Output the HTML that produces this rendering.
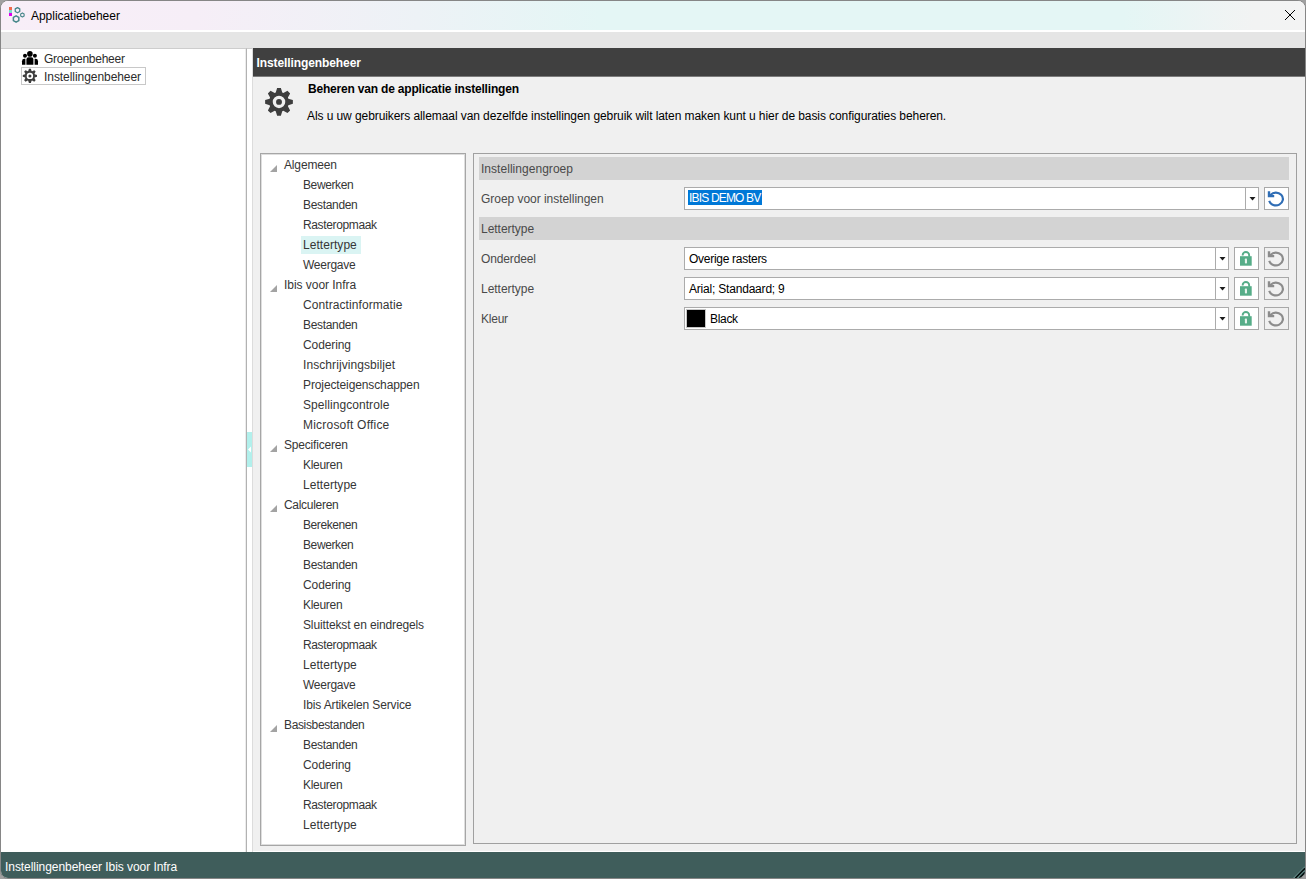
<!DOCTYPE html>
<html lang="nl">
<head>
<meta charset="utf-8">
<title>Applicatiebeheer</title>
<style>
html,body{margin:0;padding:0;}
body{width:1306px;height:879px;overflow:hidden;background:#a0a0a0;font-family:"Liberation Sans",sans-serif;font-size:12px;color:#1e1e1e;position:relative;}
.abs{position:absolute;}
svg{position:absolute;overflow:visible;}
#win{position:absolute;left:0;top:0;width:1306px;height:879px;box-sizing:border-box;border:1px solid #868686;border-radius:8px;overflow:hidden;background:#fff;}
#inner{position:absolute;left:-1px;top:-1px;width:1306px;height:879px;}
#titlebar{position:absolute;left:0;top:0;width:1306px;height:30px;background:linear-gradient(90deg,#f8eef8 0%,#f6eef7 15%,#edf2f6 32%,#e4f6f5 46%,#e4f6f5 86%,#f2f3f3 96%,#f3f3f3 100%);}
#strip{position:absolute;left:0;top:32px;width:1306px;height:16px;background:#e5e5e5;}
#leftpane{position:absolute;left:0;top:48px;width:246px;height:803px;background:#fff;border-right:1px solid #b2b2b2;border-top:1px solid #cdcdcd;box-shadow:inset -1px 0 0 #ececec;}
#splitter{position:absolute;left:247px;top:48px;width:5px;height:803px;background:#fff;border-right:1px solid #dcdcdc;border-top:1px solid #cdcdcd;}
#handle{position:absolute;left:247px;top:432px;width:5px;height:35px;background:#b2f0ec;}
#main{position:absolute;left:253px;top:48px;width:1053px;height:803px;background:#f0f0f0;border-bottom:1px solid #fff;}
#mainhead{position:absolute;left:253px;top:48px;width:1053px;height:28px;background:#404040;border-bottom:1px solid #7c7c7c;}
#status{position:absolute;left:0;top:852px;width:1306px;height:27px;background:#3f5d5b;}
.t{position:absolute;white-space:nowrap;line-height:14px;height:14px;}
#navsel{position:absolute;left:21px;top:67px;width:123px;height:16px;border:1px solid #c8c8c8;}
#tree{position:absolute;left:260px;top:153px;width:204px;height:691px;background:#fff;border:1px solid #a6a6a6;box-shadow:inset 0 0 0 1px #dedede;}
#treesel{position:absolute;left:301px;top:236px;width:60px;height:18px;background:#daf4f3;}
#panel{position:absolute;left:473px;top:153px;width:822px;height:689px;border:1px solid #a0a0a0;background:#f0f0f0;}
.gh{position:absolute;left:479px;width:810px;height:23px;background:#d3d3d3;}
.combo{position:absolute;left:684px;height:21px;border:1px solid #ababab;background:#fff;}
.dd{position:absolute;width:0;height:21px;border-left:1px solid #ababab;}
.btn{position:absolute;width:23px;height:21px;border:1px solid #a8a8a8;background:#fff;}
.btn.dis{background:#f0f0f0;}
</style>
</head>
<body>
<div id="win"><div id="inner">
<header>
<div id="titlebar"></div>
<svg width="1306" height="879" viewBox="0 0 1306 879" style="left:0;top:0" aria-hidden="true"><rect x="9" y="7" width="3" height="3" fill="#ee6a4c"/><rect x="9" y="10" width="3" height="3" fill="#7ddccb"/><rect x="9" y="13" width="3" height="3" fill="#dc00ec"/><polygon points="17.50,7.60 19.75,8.90 19.75,11.50 17.50,12.80 15.25,11.50 15.25,8.90" fill="none" stroke="#46878a" stroke-width="1.30" stroke-linejoin="round"/><polygon points="22.40,12.90 24.13,13.90 24.13,15.90 22.40,16.90 20.67,15.90 20.67,13.90" fill="none" stroke="#46878a" stroke-width="1.10" stroke-linejoin="round"/><polygon points="16.10,15.85 18.83,17.43 18.83,20.57 16.10,22.15 13.37,20.57 13.37,17.43" fill="none" stroke="#46878a" stroke-width="1.50" stroke-linejoin="round"/><path d="M1285 10L1295 20M1295 10L1285 20" stroke="#000" stroke-width="1" fill="none"/></svg>
<div class="t" style="left:31px;top:9px;letter-spacing:-0.034px;color:#000">Applicatiebeheer</div>
<div id="strip"></div>
</header>
<nav>
<div id="leftpane"></div>
<div id="navsel"></div>
<svg width="1306" height="879" viewBox="0 0 1306 879" style="left:0;top:0" aria-hidden="true"><g fill="#000"><circle cx="29.9" cy="53.9" r="2.8"/><path d="M26.4 64.7V59.4a2.1 2.1 0 0 1 2.1-2.1h2.8a2.1 2.1 0 0 1 2.1 2.1V64.7Z"/><circle cx="25" cy="55.7" r="2"/><path d="M22 64.7V61.2a2.4 2.4 0 0 1 2.4-2.4h1V64.7Z"/><circle cx="34.9" cy="55.7" r="2"/><path d="M38 64.7V61.2a2.4 2.4 0 0 0-2.4-2.4h-1V64.7Z"/></g><path fill="#3e3e3e" fill-rule="evenodd" d="M28.22 71.09 L28.93 68.77 L30.87 68.77 L31.58 71.09 L32.11 71.32 L34.26 70.17 L35.63 71.54 L34.48 73.69 L34.71 74.22 L37.03 74.93 L37.03 76.87 L34.71 77.58 L34.48 78.11 L35.63 80.26 L34.26 81.63 L32.11 80.48 L31.58 80.71 L30.87 83.03 L28.93 83.03 L28.22 80.71 L27.69 80.48 L25.54 81.63 L24.17 80.26 L25.32 78.11 L25.09 77.58 L22.77 76.87 L22.77 74.93 L25.09 74.22 L25.32 73.69 L24.17 71.54 L25.54 70.17 L27.69 71.32Z M26.69 75.90a3.21 3.21 0 1 0 6.43 0a3.21 3.21 0 1 0 -6.43 0Z"/><circle cx="29.90" cy="75.90" r="1.52" fill="#3e3e3e"/></svg>
<div class="t" style="left:44px;top:52px;letter-spacing:-0.265px;color:#2c2c2c">Groepenbeheer</div>
<div class="t" style="left:44px;top:70px;letter-spacing:-0.058px;color:#2c2c2c">Instellingenbeheer</div>
</nav>
<div id="splitter"></div>
<div id="handle"></div>
<svg width="1306" height="879" viewBox="0 0 1306 879" style="left:0;top:0" aria-hidden="true"><path d="M251 446.5V452.5L248 449.5Z" fill="#fff"/></svg>
<main>
<div id="main"></div>
<div id="mainhead"></div>
<svg width="1306" height="879" viewBox="0 0 1306 879" style="left:0;top:0" aria-hidden="true"><path fill="#3e3e3e" fill-rule="evenodd" d="M275.74 92.55 L277.12 88.03 L280.88 88.03 L282.26 92.55 L283.31 92.99 L287.48 90.76 L290.14 93.42 L287.91 97.59 L288.35 98.64 L292.87 100.02 L292.87 103.78 L288.35 105.16 L287.91 106.21 L290.14 110.38 L287.48 113.04 L283.31 110.81 L282.26 111.25 L280.88 115.77 L277.12 115.77 L275.74 111.25 L274.69 110.81 L270.52 113.04 L267.86 110.38 L270.09 106.21 L269.65 105.16 L265.13 103.78 L265.13 100.02 L269.65 98.64 L270.09 97.59 L267.86 93.42 L270.52 90.76 L274.69 92.99Z M272.75 101.90a6.25 6.25 0 1 0 12.50 0a6.25 6.25 0 1 0 -12.50 0Z"/><circle cx="279.00" cy="101.90" r="2.95" fill="#3e3e3e"/></svg>
<div class="t" style="left:256.5px;top:56px;letter-spacing:-0.096px;color:#fff;font-weight:bold">Instellingenbeheer</div>
<div class="t" style="left:308px;top:82px;letter-spacing:-0.191px;color:#000;font-weight:bold">Beheren van de applicatie instellingen</div>
<div class="t" style="left:307px;top:109px;letter-spacing:-0.081px;color:#000">Als u uw gebruikers allemaal van dezelfde instellingen gebruik wilt laten maken kunt u hier de basis configuraties beheren.</div>
<div role="tree">
<div id="tree"></div>
<div id="treesel"></div>
<svg width="1306" height="879" viewBox="0 0 1306 879" style="left:0;top:0" aria-hidden="true"><path d="M277 172h-7l7-7z" fill="#a3a3a3"/><path d="M277 292h-7l7-7z" fill="#a3a3a3"/><path d="M277 452h-7l7-7z" fill="#a3a3a3"/><path d="M277 512h-7l7-7z" fill="#a3a3a3"/><path d="M277 732h-7l7-7z" fill="#a3a3a3"/></svg>
<div class="t" style="left:284px;top:158px;letter-spacing:-0.15px;color:#363636">Algemeen</div>
<div class="t" style="left:303px;top:178px;letter-spacing:-0.396px;color:#363636">Bewerken</div>
<div class="t" style="left:303px;top:198px;letter-spacing:-0.324px;color:#363636">Bestanden</div>
<div class="t" style="left:303px;top:218px;letter-spacing:-0.359px;color:#363636">Rasteropmaak</div>
<div class="t" style="left:303px;top:238px;letter-spacing:0.047px;color:#363636">Lettertype</div>
<div class="t" style="left:303px;top:258px;letter-spacing:-0.269px;color:#363636">Weergave</div>
<div class="t" style="left:284px;top:278px;letter-spacing:-0.043px;color:#363636">Ibis voor Infra</div>
<div class="t" style="left:303px;top:298px;letter-spacing:0.08px;color:#363636">Contractinformatie</div>
<div class="t" style="left:303px;top:318px;letter-spacing:-0.324px;color:#363636">Bestanden</div>
<div class="t" style="left:303px;top:338px;letter-spacing:-0.1px;color:#363636">Codering</div>
<div class="t" style="left:303px;top:358px;letter-spacing:0.083px;color:#363636">Inschrijvingsbiljet</div>
<div class="t" style="left:303px;top:378px;letter-spacing:-0.114px;color:#363636">Projecteigenschappen</div>
<div class="t" style="left:303px;top:398px;letter-spacing:0.061px;color:#363636">Spellingcontrole</div>
<div class="t" style="left:303px;top:418px;letter-spacing:0.211px;color:#363636">Microsoft Office</div>
<div class="t" style="left:284px;top:438px;letter-spacing:-0.186px;color:#363636">Specificeren</div>
<div class="t" style="left:303px;top:458px;letter-spacing:-0.296px;color:#363636">Kleuren</div>
<div class="t" style="left:303px;top:478px;letter-spacing:0.047px;color:#363636">Lettertype</div>
<div class="t" style="left:284px;top:498px;letter-spacing:-0.297px;color:#363636">Calculeren</div>
<div class="t" style="left:303px;top:518px;letter-spacing:-0.406px;color:#363636">Berekenen</div>
<div class="t" style="left:303px;top:538px;letter-spacing:-0.396px;color:#363636">Bewerken</div>
<div class="t" style="left:303px;top:558px;letter-spacing:-0.324px;color:#363636">Bestanden</div>
<div class="t" style="left:303px;top:578px;letter-spacing:-0.1px;color:#363636">Codering</div>
<div class="t" style="left:303px;top:598px;letter-spacing:-0.296px;color:#363636">Kleuren</div>
<div class="t" style="left:303px;top:618px;letter-spacing:-0.129px;color:#363636">Sluittekst en eindregels</div>
<div class="t" style="left:303px;top:638px;letter-spacing:-0.359px;color:#363636">Rasteropmaak</div>
<div class="t" style="left:303px;top:658px;letter-spacing:0.047px;color:#363636">Lettertype</div>
<div class="t" style="left:303px;top:678px;letter-spacing:-0.269px;color:#363636">Weergave</div>
<div class="t" style="left:303px;top:698px;letter-spacing:-0.138px;color:#363636">Ibis Artikelen Service</div>
<div class="t" style="left:284px;top:718px;letter-spacing:-0.354px;color:#363636">Basisbestanden</div>
<div class="t" style="left:303px;top:738px;letter-spacing:-0.324px;color:#363636">Bestanden</div>
<div class="t" style="left:303px;top:758px;letter-spacing:-0.1px;color:#363636">Codering</div>
<div class="t" style="left:303px;top:778px;letter-spacing:-0.296px;color:#363636">Kleuren</div>
<div class="t" style="left:303px;top:798px;letter-spacing:-0.359px;color:#363636">Rasteropmaak</div>
<div class="t" style="left:303px;top:818px;letter-spacing:0.047px;color:#363636">Lettertype</div>
</div>
<section>
<div id="panel"></div>
<div class="gh" style="top:157px"></div>
<div class="gh" style="top:217px"></div>
<div class="combo" style="top:187px;width:573px"></div>
<div class="abs" style="left:688px;top:190px;width:74px;height:15px;background:#0078d7"></div>
<div class="dd" style="left:1245px;top:188px"></div>
<div class="btn" style="left:1264px;top:187px"></div>
<div class="combo" style="top:247px;width:543px"></div>
<div class="dd" style="left:1215px;top:248px"></div>
<div class="btn" style="left:1234px;top:247px"></div><div class="btn dis" style="left:1264px;top:247px"></div>
<div class="combo" style="top:277px;width:543px"></div>
<div class="dd" style="left:1215px;top:278px"></div>
<div class="btn" style="left:1234px;top:277px"></div><div class="btn dis" style="left:1264px;top:277px"></div>
<div class="combo" style="top:307px;width:543px"></div>
<div class="dd" style="left:1215px;top:308px"></div>
<div class="btn" style="left:1234px;top:307px"></div><div class="btn dis" style="left:1264px;top:307px"></div>
<div class="abs" style="left:687px;top:310px;width:18px;height:17px;background:#000;box-shadow:0 0 0 1px rgba(130,130,130,.45)"></div>
<div class="t" style="left:481px;top:162px;letter-spacing:0.037px;color:#4a4a4a">Instellingengroep</div>
<div class="t" style="left:481px;top:192px;letter-spacing:-0.037px;color:#4a4a4a">Groep voor instellingen</div>
<div class="t" style="left:689px;top:191px;letter-spacing:-0.824px;color:#fff">IBIS DEMO BV</div>
<div class="t" style="left:481px;top:222px;letter-spacing:-0.031px;color:#4a4a4a">Lettertype</div>
<div class="t" style="left:481px;top:251.5px;letter-spacing:-0.143px;color:#4a4a4a">Onderdeel</div>
<div class="t" style="left:689px;top:251.5px;letter-spacing:-0.281px;color:#000">Overige rasters</div>
<div class="t" style="left:481px;top:281.5px;letter-spacing:-0.031px;color:#4a4a4a">Lettertype</div>
<div class="t" style="left:689px;top:281.5px;letter-spacing:-0.2px;color:#000">Arial; Standaard; 9</div>
<div class="t" style="left:481px;top:311.5px;letter-spacing:-0.229px;color:#4a4a4a">Kleur</div>
<div class="t" style="left:710px;top:311.5px;letter-spacing:-0.311px;color:#000">Black</div>
<svg width="1306" height="879" viewBox="0 0 1306 879" style="left:0;top:0" aria-hidden="true"><path d="M1249.5 197h6l-3 3.6z" fill="#1c1c1c"/><path d="M1219.5 257h6l-3 3.6z" fill="#1c1c1c"/><path d="M1219.5 287h6l-3 3.6z" fill="#1c1c1c"/><path d="M1219.5 317h6l-3 3.6z" fill="#1c1c1c"/><g fill="none" stroke="#2f6db5" stroke-width="2.2"><path d="M1270.30 195.20A7 6.4 0 1 1 1269.20 200.90"/><path d="M1269.00 191.20V196.10H1274.20" stroke-width="2.4"/></g><rect x="1240.00" y="256.20" width="11.7" height="9.5" fill="#56ad88"/><rect x="1244.90" y="258.40" width="2.1" height="5.2" rx="0.8" fill="#e3f2eb"/><path d="M1242.65 255.60v-0.4a3.25 3.25 0 0 1 6.5 0v1.5" fill="none" stroke="#56ad88" stroke-width="1.9"/><g fill="none" stroke="#8c8c8c" stroke-width="2.2"><path d="M1270.30 255.20A7 6.4 0 1 1 1269.20 260.90"/><path d="M1269.00 251.20V256.10H1274.20" stroke-width="2.4"/></g><rect x="1240.00" y="286.20" width="11.7" height="9.5" fill="#56ad88"/><rect x="1244.90" y="288.40" width="2.1" height="5.2" rx="0.8" fill="#e3f2eb"/><path d="M1242.65 285.60v-0.4a3.25 3.25 0 0 1 6.5 0v1.5" fill="none" stroke="#56ad88" stroke-width="1.9"/><g fill="none" stroke="#8c8c8c" stroke-width="2.2"><path d="M1270.30 285.20A7 6.4 0 1 1 1269.20 290.90"/><path d="M1269.00 281.20V286.10H1274.20" stroke-width="2.4"/></g><rect x="1240.00" y="316.20" width="11.7" height="9.5" fill="#56ad88"/><rect x="1244.90" y="318.40" width="2.1" height="5.2" rx="0.8" fill="#e3f2eb"/><path d="M1242.65 315.60v-0.4a3.25 3.25 0 0 1 6.5 0v1.5" fill="none" stroke="#56ad88" stroke-width="1.9"/><g fill="none" stroke="#8c8c8c" stroke-width="2.2"><path d="M1270.30 315.20A7 6.4 0 1 1 1269.20 320.90"/><path d="M1269.00 311.20V316.10H1274.20" stroke-width="2.4"/></g></svg>
</section>
</main>
<footer>
<div id="status"></div>
<div class="t" style="left:5px;top:860px;letter-spacing:-0.058px;color:#fff">Instellingenbeheer Ibis voor Infra</div>
<svg width="1306" height="879" viewBox="0 0 1306 879" style="left:0;top:0" aria-hidden="true"><g fill="none"><path d="M1293.5 878.3L1305.3 866.5" stroke="#9fd8d2" stroke-width="1"/><path d="M1295 878.3L1305.3 868" stroke="#051010" stroke-width="1.8"/><path d="M1297.4 878.3L1305.3 870.4" stroke="#9fd8d2" stroke-width="1"/><path d="M1299 878.3L1305.3 872" stroke="#051010" stroke-width="1.8"/></g></svg>
</footer>
</div></div>
</body>
</html>
